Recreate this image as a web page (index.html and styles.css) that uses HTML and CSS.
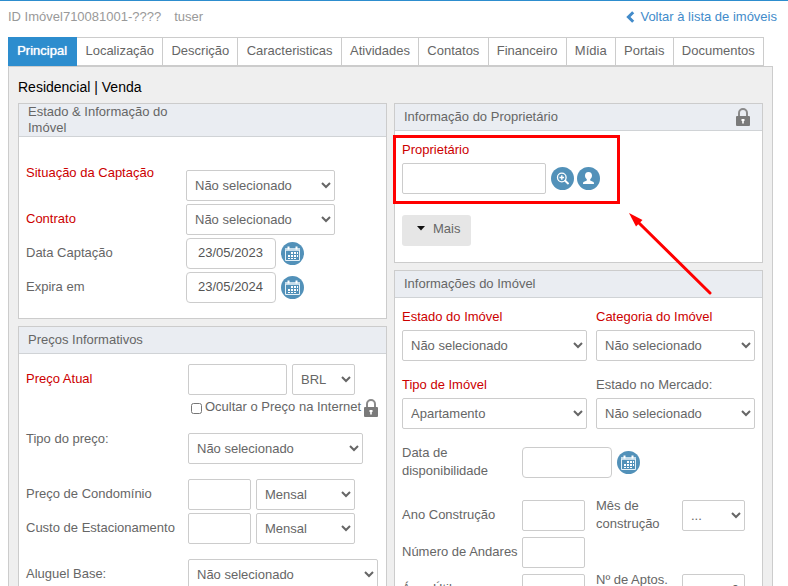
FILE: index.html
```html
<!DOCTYPE html>
<html lang="pt">
<head>
<meta charset="utf-8">
<title>Imóvel</title>
<link rel="stylesheet" href="styles.css">
</head>
<body>
<svg class="defs" aria-hidden="true">
  <symbol id="calendar" viewBox="0 0 23 23">
    <circle cx="11.5" cy="11.5" r="11.5" fill="#5291b9"/>
    <path d="M4 6h15v3h-15z" fill="#c5dcea"/>
    <path d="M4.500 8v10.500h14v-10.500" fill="none" stroke="#e4f0f7"/>
    <path d="M7.500 4.500v3M15.500 4.500v3" stroke="#fff" stroke-width="2"/>
    <path d="M10 10h2v2h-2zM13 10h2v2h-2zM16 10h1v2h-1zM7 13h2v2h-2zM10 13h2v2h-2zM13 13h2v2h-2zM16 13h1v2h-1zM7 16h2v1h-2zM10 16h2v1h-2zM13 16h2v1h-2z" fill="#fff"/>
  </symbol>
  <symbol id="search" viewBox="0 0 23 23">
    <circle cx="11.500" cy="11.500" r="11.500" fill="#5291b9"/>
    <circle cx="10.800" cy="10.500" r="4.300" fill="none" stroke="#fff" stroke-width="1.300"/>
    <path d="M8.500 10.500h4.600M10.800 8.200v4.600" stroke="#fff" stroke-width="1.400"/>
    <path d="M14.200 13.800l2.800 2.600" stroke="#fff" stroke-width="2" stroke-linecap="round"/>
  </symbol>
  <symbol id="person" viewBox="0 0 23 23">
    <circle cx="11.500" cy="11.500" r="11.500" fill="#5291b9"/>
    <path d="M11.500 5c2.400 0 3.500 1.500 3.500 3.600 0 1.700-.8 3-1.800 3.700v1.200l2.800 1.200c.8.300 1 1 1 2.300h-11c0-1.300.2-2 1-2.300l2.800-1.200v-1.200c-1-.7-1.800-2-1.800-3.700 0-2.100 1.100-3.600 3.500-3.600z" fill="#fff"/>
  </symbol>
  <symbol id="lock" viewBox="0 0 14 18">
    <path d="M3 9V5a4 4 0 0 1 8 0V9" fill="none" stroke="#8a8a8a" stroke-width="2"/>
    <rect x="0" y="8" width="14" height="10" rx="1" fill="#7a7a7a"/>
    <path d="M5.500 11h3v2h-.7v2.500h-1.600v-2.500h-.7z" fill="#fff"/>
  </symbol>
</svg>

<header class="top">
  <div class="ids"><span>ID Imóvel710081001-????</span><span>tuser</span></div>
  <a class="back" href="#"><svg width="9" height="12" viewBox="0 0 9 12"><path d="M7.200 1.200L2.400 6l4.800 4.800" fill="none" stroke="#428bca" stroke-width="3"/></svg>Voltar à lista de imóveis</a>
</header>

<nav class="tabs">
  <a class="active" href="#">Principal</a>
  <a href="#">Localização</a>
  <a href="#">Descrição</a>
  <a href="#">Caracteristicas</a>
  <a href="#">Atividades</a>
  <a href="#">Contatos</a>
  <a href="#">Financeiro</a>
  <a href="#">Mídia</a>
  <a href="#">Portais</a>
  <a href="#">Documentos</a>
</nav>

<main class="panel">
  <h1>Residencial | Venda</h1>
  <div class="columns">
    <div class="column">
      <section class="card">
        <h2 class="tall"><span>Estado &amp; Informação do Imóvel</span></h2>
        <div class="rows state">
          <div class="row raised">
            <label class="req" for="situacao">Situação da Captação</label>
            <select id="situacao" class="w149"><option>Não selecionado</option></select>
          </div>
          <div class="row">
            <label class="req" for="contrato">Contrato</label>
            <select id="contrato" class="w149"><option>Não selecionado</option></select>
          </div>
          <div class="row">
            <label for="captacao">Data Captação</label>
            <input id="captacao" class="date" type="text" value="23/05/2023">
            <button class="icon" type="button" aria-label="Calendário"><svg><use href="#calendar"/></svg></button>
          </div>
          <div class="row">
            <label for="expira">Expira em</label>
            <input id="expira" class="date" type="text" value="23/05/2024">
            <button class="icon" type="button" aria-label="Calendário"><svg><use href="#calendar"/></svg></button>
          </div>
        </div>
      </section>

      <section class="card">
        <h2>Preços Informativos</h2>
        <div class="rows prices">
          <div class="row">
            <label class="req" for="preco">Preço Atual</label>
            <input id="preco" class="w99" type="text">
            <select class="w63" aria-label="Moeda"><option>BRL</option></select>
          </div>
          <div class="hide-price">
            <input id="ocultar" type="checkbox"><label for="ocultar">Ocultar o Preço na Internet</label>
            <svg class="lock"><use href="#lock"/></svg>
          </div>
          <div class="row top-label">
            <label for="tipopreco">Tipo do preço:</label>
            <select id="tipopreco" class="w175"><option>Não selecionado</option></select>
          </div>
          <div class="row spaced">
            <label for="condominio">Preço de Condomínio</label>
            <input id="condominio" class="w63" type="text">
            <select class="w99" aria-label="Período do condomínio"><option>Mensal</option></select>
          </div>
          <div class="row">
            <label for="estac">Custo de Estacionamento</label>
            <input id="estac" class="w63" type="text">
            <select class="w99" aria-label="Período do estacionamento"><option>Mensal</option></select>
          </div>
          <div class="row spaced">
            <label for="aluguel">Aluguel Base:</label>
            <select id="aluguel" class="w190"><option>Não selecionado</option></select>
          </div>
        </div>
      </section>
    </div>

    <div class="column">
      <section class="card">
        <h2>Informação do Proprietário <svg class="lock"><use href="#lock"/></svg></h2>
        <div class="owner">
          <label class="req" for="prop">Proprietário</label>
          <div class="owner-line">
            <input id="prop" class="w144" type="text">
            <button class="icon" type="button" aria-label="Pesquisar"><svg><use href="#search"/></svg></button>
            <button class="icon" type="button" aria-label="Pessoa"><svg><use href="#person"/></svg></button>
          </div>
          <button class="more" type="button"><svg width="8" height="5" viewBox="0 0 8 5"><path d="M0 0h8l-4 4.500z" fill="#111"/></svg>Mais</button>
          <div class="highlight"></div>
          <svg class="arrow" viewBox="0 0 86 86"><path d="M9 9L81 80" stroke="#f00" stroke-width="3" stroke-linecap="round"/><path d="M0 0l13.500 7-6.500 6.500z" fill="#f00"/></svg>
        </div>
      </section>

      <section class="card">
        <h2>Informações do Imóvel</h2>
        <div class="info">
          <div class="pair">
            <div class="field"><label class="req" for="estado">Estado do Imóvel</label><select id="estado"><option>Não selecionado</option></select></div>
            <div class="field"><label class="req" for="categoria">Categoria do Imóvel</label><select id="categoria"><option>Não selecionado</option></select></div>
            <div class="field"><label class="req" for="tipo">Tipo de Imóvel</label><select id="tipo"><option>Apartamento</option></select></div>
            <div class="field"><label for="mercado">Estado no Mercado:</label><select id="mercado"><option>Não selecionado</option></select></div>
          </div>
          <div class="row avail">
            <label for="disp">Data de disponibilidade</label>
            <input id="disp" class="date" type="text">
            <button class="icon" type="button" aria-label="Calendário"><svg><use href="#calendar"/></svg></button>
          </div>
          <div class="details">
            <label for="ano">Ano Construção</label><input id="ano" class="w63" type="text">
            <label for="mes">Mês de construção</label><select id="mes" class="w63"><option>...</option></select>
            <label for="andares">Número de Andares</label><input id="andares" class="w63" type="text">
            <span></span><span></span>
            <label for="area">Área Útil</label><input id="area" class="w63" type="text">
            <label class="aptos" for="aptos">Nº de Aptos.</label><input id="aptos" class="w63 num" type="text" value="0">
          </div>
        </div>
      </section>
    </div>
  </div>
</main>
</body>
</html>
```
FILE: styles.css
```css
* { box-sizing: border-box; }
html { height: 100%; overflow: hidden; }
body {
  margin: 0;
  border-top: 1px solid #2d8dce;
  background: #fff;
  color: #666;
  font: 13px/18px "Liberation Sans", Arial, sans-serif;
}
.defs { position: absolute; width: 0; height: 0; }
input, select, button { font: inherit; color: inherit; margin: 0; }

.top {
  display: flex;
  justify-content: space-between;
  padding: 7px 11px 11px 8px;
}
.ids { display: flex; gap: 13px; color: #999; }
.back { display: flex; align-items: center; gap: 5px; color: #428bca; text-decoration: none; }

.tabs { display: flex; margin: 0 24px 0 8px; }
.tabs a {
  flex: 1 0 auto;
  height: 29px;
  padding: 0 8px;
  border: solid #ccc;
  border-width: 1px 1px 1px 0;
  line-height: 25px;
  text-align: center;
  color: #666;
  text-decoration: none;
}
.tabs a.active {
  padding: 0 9px;
  border-color: #2d8dce;
  background: #2d8dce;
  color: #fff;
  text-shadow: 0 0 1px #fff;
}

.panel {
  margin: 0 15px 0 8px;
  padding: 11px 9px 9px;
  border: 1px solid #ccc;
  background: #efefef;
}
h1 { margin: 0 0 7px; font-size: 14px; line-height: 18px; font-weight: normal; color: #000; }
.columns { display: grid; grid-template-columns: 1fr 1fr; gap: 7px; }
.column { display: flex; flex-direction: column; gap: 7px; min-width: 0; }
.card { border: 1px solid #ccc; background: #fff; }
h2 {
  display: flex;
  align-items: center;
  justify-content: space-between;
  height: 27px;
  margin: 0;
  padding: 0 12px 0 9px;
  border-bottom: 1px solid #d0d3d6;
  background: #eaedf2;
  font-size: 13px;
  line-height: 16px;
  font-weight: normal;
}
h2.tall { height: 33px; }
h2.tall span { width: 150px; }
.lock { width: 14px; height: 18px; flex: none; }

.req { color: #c00; }
input[type="text"], select {
  height: 31px;
  padding: 0 8px;
  border: 1px solid #ccc;
  border-radius: 2px;
  background: #fff;
  flex: none;
}
select { padding: 0 4px; }
input.date { width: 90px; border-radius: 4px; padding: 0 8px 2px 11px; color: #555; }
.w63 { width: 63px; }
.w99 { width: 99px; }
.w144 { width: 144px; }
.w149 { width: 149px; }
.w175 { width: 175px; }
.w190 { width: 190px; }

.icon { width: 23px; height: 23px; padding: 0; border: 0; background: none; flex: none; }
.icon svg { display: block; width: 23px; height: 23px; }

.rows { display: flex; flex-direction: column; gap: 3px; }
.row { display: flex; align-items: center; gap: 5px; }
.rows .row > label { flex: none; padding-bottom: 2px; line-height: 16px; }
.state { padding: 28px 7px 15px; }
.state .row > label { width: 155px; }
.row.raised { align-items: flex-start; }
.row.raised select { margin-top: 5px; }
.prices { padding: 10px 7px; }
.prices .row > label { width: 157px; }
.hide-price { display: flex; align-items: center; gap: 3px; height: 20px; margin-left: 165px; white-space: nowrap; }
.hide-price input { width: 11px; height: 11px; margin: 0; }
.hide-price label { padding-bottom: 2px; }
.row.top-label { margin-top: 10px; align-items: flex-start; }
.row.top-label select { margin-top: 2px; }
.row.spaced { margin-top: 12px; }

.owner { position: relative; padding: 10px 7px 16px; }
.owner > label { display: block; }
.owner-line { display: flex; align-items: center; gap: 3px; margin: 4px 0 21px; }
.owner-line input { margin-right: 2px; }
.more {
  display: flex;
  align-items: center;
  gap: 8px;
  height: 31px;
  padding: 0 11px 4px 15px;
  border: 0;
  border-radius: 3px;
  background: #e6e6e6;
}
.highlight { position: absolute; left: -2px; top: 4px; width: 227px; height: 69px; border: 3px solid #f00; }
.arrow { position: absolute; left: 234px; top: 82px; width: 86px; height: 86px; z-index: 1; }

.info { padding: 10px 7px; }
.pair { display: grid; grid-template-columns: 185fr 159fr; gap: 15px 9px; }
.field { display: flex; flex-direction: column; gap: 4px; }
.field select { width: 100%; }
.row.avail { margin: 15px 0 17px; }
.row.avail > label { width: 115px; flex: none; }
.details {
  display: grid;
  grid-template-columns: 120px 74px 86px 1fr;
  row-gap: 3px;
  align-items: center;
}
.details > label { padding-bottom: 1px; }
.details .num { text-align: right; padding-right: 5px; }
.details .aptos { min-height: 36px; }
```
